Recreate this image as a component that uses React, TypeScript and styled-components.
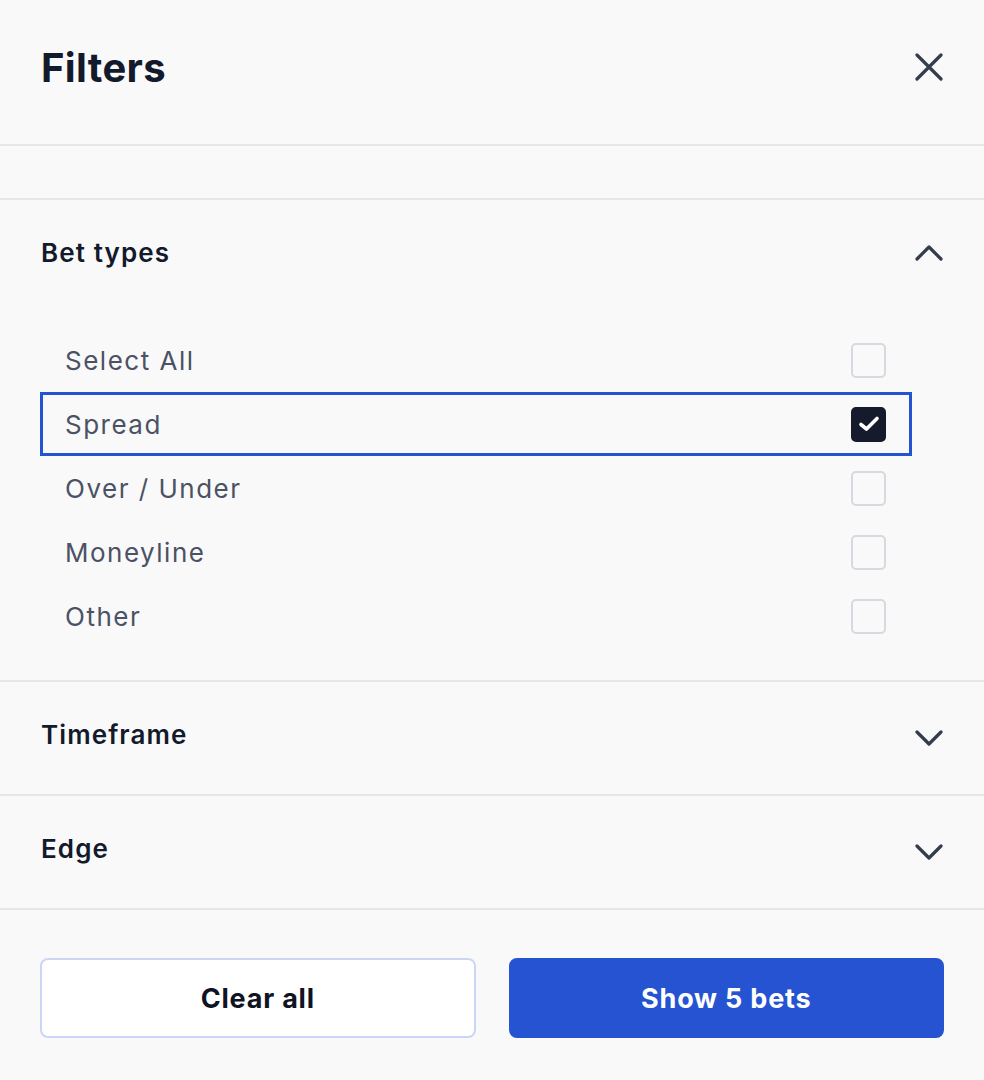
import React from "react";
import styled, { createGlobalStyle } from "styled-components";

const Global = createGlobalStyle`
  html, body { margin: 0; padding: 0; background: #f9f9fa; }
  * { box-sizing: border-box; }
  body { font-family: Inter, "Noto Sans", sans-serif; }
`;

const Page = styled.div`
  width: 984px;
  height: 1080px;
  background: #f9f9fa;
  display: flex;
  flex-direction: column;
  overflow: hidden;
`;

const Header = styled.header`
  height: 146px;
  padding: 0 40px 10px 41px;
  display: flex;
  align-items: center;
  justify-content: space-between;
  border-bottom: 2px solid #e6e7eb;
`;

const Title = styled.h1`
  margin: 0;
  font-size: 40px;
  font-weight: 700;
  color: #131a2b;
  letter-spacing: 0.35px;
`;

const IconButton = styled.button`
  border: none;
  background: transparent;
  padding: 0;
  width: 30px;
  height: 30px;
  display: flex;
  align-items: center;
  justify-content: center;
  color: #343c4d;
  cursor: pointer;
`;

const Stub = styled.div`
  height: 54px;
  border-bottom: 2px solid #e6e7eb;
`;

const Section = styled.section<{ $open?: boolean }>`
  padding: 0 40px ${(p) => (p.$open ? "32px" : "8px")} 40px;
  border-bottom: 2px solid #e6e7eb;
`;

const SectionHead = styled.div`
  height: 104px;
  display: flex;
  align-items: center;
  justify-content: space-between;
  padding-left: 1px;
`;

const SectionTitle = styled.h2`
  margin: 0;
  font-size: 26px;
  font-weight: 600;
  color: #131a2b;
  letter-spacing: 1.1px;
`;

const Chevron = styled.svg<{ $down?: boolean }>`
  width: 28px;
  height: 16px;
  margin-right: 1px;
  margin-top: ${(p) => (p.$down ? "8px" : "2px")};
  color: #343c4d;
`;

const Options = styled.ul`
  list-style: none;
  margin: 24px 0 0 0;
  padding: 0;
  width: 872px;
`;

const Option = styled.li<{ $focused?: boolean }>`
  height: 64px;
  display: flex;
  align-items: center;
  justify-content: space-between;
  border: 3px solid ${(p) => (p.$focused ? "#2453d2" : "transparent")};
  padding-left: 22px;
  padding-right: 23px;
`;

const OptionLabel = styled.span`
  font-size: 26px;
  color: #4a5264;
  letter-spacing: 1.5px;
`;

const Box = styled.span<{ $checked?: boolean }>`
  width: 35px;
  height: 35px;
  border-radius: 5px;
  border: 2px solid ${(p) => (p.$checked ? "#151b2c" : "#d6d9df")};
  background: ${(p) => (p.$checked ? "#151b2c" : "#f9f9fa")};
  display: flex;
  align-items: center;
  justify-content: center;
`;

const Footer = styled.footer`
  flex: 1;
  padding: 48px 40px 0 40px;
  display: grid;
  grid-template-columns: 1fr 1fr;
  column-gap: 33px;
  align-content: start;
`;

const Button = styled.button<{ $primary?: boolean }>`
  height: 80px;
  border-radius: 8px;
  border: 2px solid ${(p) => (p.$primary ? "#2553d1" : "#cbd6f4")};
  background: ${(p) => (p.$primary ? "#2553d1" : "#ffffff")};
  color: ${(p) => (p.$primary ? "#ffffff" : "#0f1424")};
  font-family: Inter, "Noto Sans", sans-serif;
  font-size: 27px;
  font-weight: 700;
  letter-spacing: 0.8px;
  cursor: pointer;
`;

const ChevronIcon = ({ down }: { down?: boolean }) => (
  <Chevron $down={down} viewBox="0 0 28 16" fill="none">
    <path
      d={down ? "M2 2 L14 14 L26 2" : "M2 14 L14 2 L26 14"}
      stroke="currentColor"
      strokeWidth="3.2"
      strokeLinecap="round"
      strokeLinejoin="round"
    />
  </Chevron>
);

const CloseIcon = () => (
  <svg width="28" height="28" viewBox="0 0 28 28" fill="none">
    <path
      d="M2 2 L26 26 M26 2 L2 26"
      stroke="currentColor"
      strokeWidth="3.2"
      strokeLinecap="round"
    />
  </svg>
);

const CheckMark = () => (
  <svg width="22" height="18" viewBox="0 0 22 18" fill="none">
    <path
      d="M3 9.5 L8.5 14 L19 3.5"
      stroke="#ffffff"
      strokeWidth="3.6"
      strokeLinecap="round"
      strokeLinejoin="round"
    />
  </svg>
);

const options = [
  { label: "Select All", checked: false },
  { label: "Spread", checked: true, focused: true },
  { label: "Over / Under", checked: false },
  { label: "Moneyline", checked: false },
  { label: "Other", checked: false },
];

export default function App() {
  return (
    <Page>
      <Global />
      <Header>
        <Title>Filters</Title>
        <IconButton aria-label="Close">
          <CloseIcon />
        </IconButton>
      </Header>
      <Stub />
      <Section $open>
        <SectionHead>
          <SectionTitle>Bet types</SectionTitle>
          <ChevronIcon />
        </SectionHead>
        <Options>
          {options.map((o) => (
            <Option key={o.label} $focused={o.focused}>
              <OptionLabel>{o.label}</OptionLabel>
              <Box $checked={o.checked}>{o.checked && <CheckMark />}</Box>
            </Option>
          ))}
        </Options>
      </Section>
      <Section>
        <SectionHead>
          <SectionTitle>Timeframe</SectionTitle>
          <ChevronIcon down />
        </SectionHead>
      </Section>
      <Section>
        <SectionHead>
          <SectionTitle>Edge</SectionTitle>
          <ChevronIcon down />
        </SectionHead>
      </Section>
      <Footer>
        <Button>Clear all</Button>
        <Button $primary>Show 5 bets</Button>
      </Footer>
    </Page>
  );
}
